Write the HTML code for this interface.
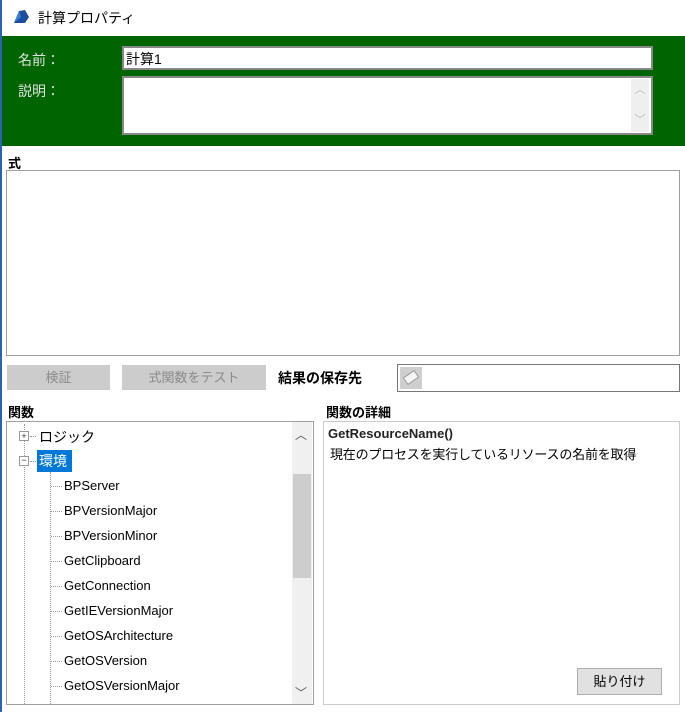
<!DOCTYPE html>
<html><head><meta charset="utf-8"><style>
*{box-sizing:border-box;margin:0;padding:0}
body{width:685px;height:712px;background:#fff;position:relative;overflow:hidden;font-family:"Liberation Sans","Noto Sans CJK JP",sans-serif;font-size:13px;color:#000}
.a{position:absolute}
.box{position:absolute;border:1px solid #a0a0a0;background:#fff}
.btn{position:absolute;background:#ccc;color:#8a8a8a;text-align:center;line-height:25px;font-size:13px}
.b{font-weight:bold}
.row{position:absolute;left:64px;font-size:13px}
.dash{position:absolute;left:51px;width:11px;border-top:1px dotted #999}
</style></head><body>
<div class="a" style="left:0;top:0;width:2px;height:712px;background:#2a62b8"></div>
<svg class="a" style="left:12px;top:9px" width="18" height="16" viewBox="0 0 18 16"><path d="M2 14 L7 2 L13 1 L17 8 L13 14 Z" fill="#1c4e9e"/><path d="M2 14 L7 2 L9 8 Z" fill="#3a7fd8"/></svg>
<div class="a" style="left:38px;top:8px;font-size:14px">計算プロパティ</div>
<div class="a" style="left:2px;top:36px;width:683px;height:110px;background:#006400"></div>
<div class="a" style="left:18px;top:50px;color:#e0e0e0;font-size:14px">名前：</div>
<div class="a" style="left:18px;top:81px;color:#e0e0e0;font-size:14px">説明：</div>
<div class="box" style="left:122px;top:46px;width:531px;height:24px;border:2px solid #888;padding:1px 2px;font-size:14px">計算1</div>
<div class="box" style="left:122px;top:76px;width:531px;height:59px;border:2px solid #888"></div>
<div class="a" style="left:631px;top:79px;width:18px;height:53px;background:#efefef;color:#bbb;font-size:11px;text-align:center">
<div style="margin-top:2px">︿</div><div style="margin-top:14px">﹀</div></div>
<div class="a b" style="left:8px;top:153px;font-size:13px">式</div>
<div class="box" style="left:6px;top:170px;width:674px;height:186px"></div>
<div class="btn" style="left:7px;top:365px;width:103px">検証</div>
<div class="btn" style="left:122px;top:365px;width:144px">式関数をテスト</div>
<div class="a b" style="left:278px;top:368px;font-size:14px">結果の保存先</div>
<div class="box" style="left:397px;top:364px;width:283px;height:28px;border-color:#777"></div>
<div class="a" style="left:400px;top:367px;width:22px;height:22px;background:#cfcfcf"></div>
<div class="a" style="left:404px;top:373px;width:14px;height:9px;background:#f4f4f4;border:1px solid #999;transform:rotate(-35deg)"></div>
<div class="a b" style="left:8px;top:402px;font-size:13px">関数</div>
<div class="a b" style="left:326px;top:402px;font-size:13px">関数の詳細</div>
<div class="box" style="left:6px;top:421px;width:308px;height:284px"></div>
<div class="box" style="left:323px;top:421px;width:357px;height:284px;border-color:#ccc"></div>
<div class="a" style="left:292px;top:422px;width:20px;height:282px;background:#f0f0f0"></div>
<div class="a" style="left:293px;top:474px;width:18px;height:104px;background:#cdcdcd"></div>
<div class="a" style="left:295px;top:426px;font-size:12px;color:#555">︿</div>
<div class="a" style="left:295px;top:684px;font-size:12px;color:#555">﹀</div>
<div class="a" style="left:24px;top:424px;height:280px;border-left:1px dotted #999"></div>
<div class="a" style="left:50px;top:472px;height:232px;border-left:1px dotted #999"></div>
<div class="a" style="left:19px;top:431px;width:10px;height:10px;border:1px solid #999;background:#fff;font-size:9px;line-height:8px;text-align:center;color:#333">+</div>
<div class="a" style="left:19px;top:456px;width:10px;height:10px;border:1px solid #999;background:#fff;font-size:9px;line-height:7px;text-align:center;color:#333">−</div>
<div class="a" style="left:30px;top:436px;width:6px;border-top:1px dotted #999"></div>
<div class="a" style="left:30px;top:461px;width:6px;border-top:1px dotted #999"></div>
<div class="a" style="left:39px;top:427px;font-size:14px">ロジック</div>
<div class="a" style="left:37px;top:450px;width:35px;height:22px;background:#0078d7;color:#fff;font-size:14px;padding:1px 2px">環境</div>
<div class="dash" style="top:486px"></div><div class="row" style="top:478px">BPServer</div>
<div class="dash" style="top:511px"></div><div class="row" style="top:503px">BPVersionMajor</div>
<div class="dash" style="top:536px"></div><div class="row" style="top:528px">BPVersionMinor</div>
<div class="dash" style="top:561px"></div><div class="row" style="top:553px">GetClipboard</div>
<div class="dash" style="top:586px"></div><div class="row" style="top:578px">GetConnection</div>
<div class="dash" style="top:611px"></div><div class="row" style="top:603px">GetIEVersionMajor</div>
<div class="dash" style="top:636px"></div><div class="row" style="top:628px">GetOSArchitecture</div>
<div class="dash" style="top:661px"></div><div class="row" style="top:653px">GetOSVersion</div>
<div class="dash" style="top:686px"></div><div class="row" style="top:678px">GetOSVersionMajor</div>
<div class="a b" style="left:328px;top:426px;font-size:13px;color:#222">GetResourceName()</div>
<div class="a" style="left:330px;top:444px;font-size:13px;letter-spacing:-0.2px">現在のプロセスを実行しているリソースの名前を取得</div>
<div class="a" style="left:577px;top:668px;width:85px;height:27px;background:#e1e1e1;border:1px solid #adadad;text-align:center;line-height:25px;font-size:13px">貼り付け</div>
</body></html>
